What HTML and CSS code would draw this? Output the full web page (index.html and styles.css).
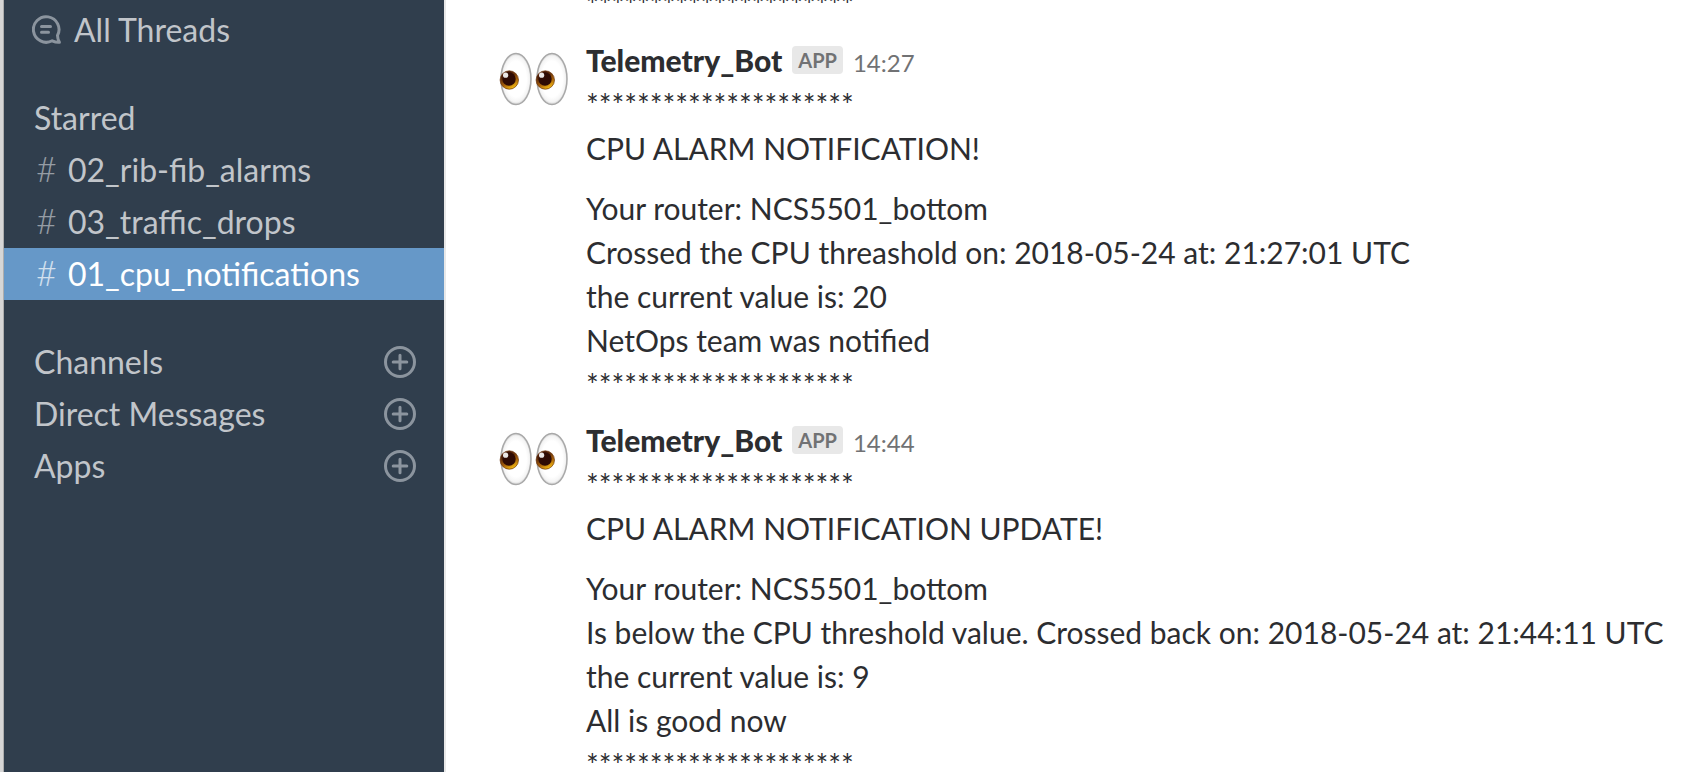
FILE: index.html
```
<!DOCTYPE html>
<html lang="en">
<head>
<meta charset="utf-8">
<title>01_cpu_notifications</title>
<link rel="stylesheet" href="styles.css">
</head>
<body>
<svg class="defs" aria-hidden="true">
  <defs>
    <radialGradient id="white" cx="0.5" cy="0.5" r="0.5">
      <stop offset="0.7" stop-color="#fff"/>
      <stop offset="0.9" stop-color="#f4f4f4"/>
      <stop offset="1" stop-color="#d0d0d0"/>
    </radialGradient>
    <linearGradient id="iris" x1="0.2" y1="0" x2="0.7" y2="1">
      <stop offset="0.2" stop-color="#4e1f0b"/>
      <stop offset="0.65" stop-color="#a8620a"/>
      <stop offset="1" stop-color="#ffc814"/>
    </linearGradient>
    <symbol id="eye" viewBox="0 0 34 56">
      <ellipse cx="17" cy="28" rx="15" ry="25.5" fill="url(#white)" stroke="#a9a9a9" stroke-width="1.5"/>
      <circle cx="10.3" cy="29" r="9.2" fill="url(#iris)" stroke="#6b330c" stroke-width="0.7"/>
      <circle cx="10" cy="28" r="6.7" fill="#2e0b04"/>
      <circle cx="6.6" cy="24.2" r="2.6" fill="#fff" opacity="0.9"/>
    </symbol>
    <symbol id="plus" viewBox="0 0 32 32">
      <g fill="none" stroke="currentColor" stroke-width="3" stroke-linecap="round">
        <circle cx="16" cy="16" r="14.5"/>
        <path d="M9.2 16h13.6M16 9.2v13.6"/>
      </g>
    </symbol>
  </defs>
</svg>
<div class="app">
  <nav class="sidebar" aria-label="Channels">
    <a class="row threads" href="#threads">
      <svg class="threads-icon" viewBox="0 0 30 30" aria-hidden="true">
        <g fill="none" stroke="currentColor" stroke-width="3" stroke-linecap="round" stroke-linejoin="round">
          <path d="M25.5 20.5A12.8 12.8 0 1 0 20.2 25.8Q24 27.6 27.4 27.3Q25.6 24 25.5 20.5Z"/>
          <path d="M9.5 11.5h9M9.5 17.3h7"/>
        </g>
      </svg>
      <span>All Threads</span>
    </a>
    <section class="group">
      <div class="row">Starred</div>
      <a class="row channel" href="#02"><span class="hash">#</span><span>02_rib-fib_alarms</span></a>
      <a class="row channel" href="#03"><span class="hash">#</span><span>03_traffic_drops</span></a>
      <a class="row channel active" href="#01" aria-current="page"><span class="hash">#</span><span>01_cpu_notifications</span></a>
    </section>
    <section class="group">
      <div class="row"><span>Channels</span><button class="add" type="button" aria-label="Add channel"><svg viewBox="0 0 32 32"><use href="#plus"/></svg></button></div>
      <div class="row"><span>Direct Messages</span><button class="add" type="button" aria-label="New direct message"><svg viewBox="0 0 32 32"><use href="#plus"/></svg></button></div>
      <div class="row"><span>Apps</span><button class="add" type="button" aria-label="Add app"><svg viewBox="0 0 32 32"><use href="#plus"/></svg></button></div>
    </section>
  </nav>
  <main class="messages">
    <article class="message">
      <div class="avatar"></div>
      <div class="body"><p>*********************</p></div>
    </article>
    <article class="message">
      <div class="avatar"><svg viewBox="0 0 72 72" role="img" aria-label="eyes"><use href="#eye" x="1" y="8" width="34" height="56"/><use href="#eye" x="37" y="8" width="34" height="56"/></svg></div>
      <div class="body">
        <header class="meta"><span class="name">Telemetry_Bot</span><span class="badge">APP</span><time class="time">14:27</time></header>
        <p>*********************<br>CPU ALARM NOTIFICATION!</p>
        <p>Your router: NCS5501_bottom<br>Crossed the CPU threashold on: 2018-05-24 at: 21:27:01 UTC<br>the current value is: 20<br>NetOps team was notified<br>*********************</p>
      </div>
    </article>
    <article class="message">
      <div class="avatar"><svg viewBox="0 0 72 72" role="img" aria-label="eyes"><use href="#eye" x="1" y="8" width="34" height="56"/><use href="#eye" x="37" y="8" width="34" height="56"/></svg></div>
      <div class="body">
        <header class="meta"><span class="name">Telemetry_Bot</span><span class="badge">APP</span><time class="time">14:44</time></header>
        <p>*********************<br>CPU ALARM NOTIFICATION UPDATE!</p>
        <p>Your router: NCS5501_bottom<br>Is below the CPU threshold value. Crossed back on: 2018-05-24 at: 21:44:11 UTC<br>the current value is: 9<br>All is good now<br>*********************</p>
      </div>
    </article>
  </main>
</div>
</body>
</html>
```
FILE: styles.css
```
* {
  box-sizing: border-box;
}

body {
  margin: 0;
  background: #fff;
  color: #2c2d30;
  font-family: Lato, sans-serif;
  font-size: 30px;
  line-height: 44px;
}

.defs {
  position: absolute;
  width: 0;
  height: 0;
}

.app {
  display: flex;
  height: 100vh;
  overflow: hidden;
  border-left: 3px solid #d6d6d6;
}

.sidebar {
  display: flex;
  flex-direction: column;
  flex: 0 0 443px;
  gap: 36px;
  padding-top: 4px;
  border-left: 1px solid #adadad;
  border-right: 2px solid #e8e8e8;
  background: #303e4d;
  color: #c1c5ca;
  font-size: 32px;
}

.row {
  display: flex;
  align-items: center;
  height: 52px;
  padding: 0 28px 0 30px;
  color: inherit;
  line-height: 52px;
  text-decoration: none;
}

.threads {
  gap: 12px;
  padding-left: 28px;
}

.threads-icon {
  width: 30px;
  height: 30px;
  color: #8b949e;
}

.channel {
  align-items: baseline;
}

.hash {
  width: 34px;
  padding-left: 2px;
  font-size: 36px;
  font-weight: 300;
  line-height: 48px;
  opacity: 0.7;
}

.active {
  background: #6698c8;
  color: #fff;
}

.add {
  width: 32px;
  height: 32px;
  margin-left: auto;
  padding: 0;
  border: 0;
  background: none;
  color: #8b949e;
}

.add svg,
.avatar svg {
  display: block;
  width: 100%;
}

.messages {
  flex: 1;
  min-width: 0;
  margin-top: -30px;
  padding-left: 52px;
}

.message {
  display: flex;
  gap: 16px;
  padding-top: 12px;
}

.avatar {
  flex: 0 0 72px;
  padding-top: 5px;
}

.body {
  flex: 1;
  min-width: 0;
  white-space: nowrap;
}

.body p {
  margin: 0;
}

.body p + p {
  margin-top: 16px;
}

.meta {
  display: flex;
  align-items: baseline;
  height: 44px;
}

.name {
  font-weight: 900;
}

.badge {
  align-self: center;
  margin: 0 10px;
  padding: 0 6px;
  border-radius: 4px;
  background: #e8e8e8;
  color: #717274;
  font-size: 20px;
  font-weight: 700;
  line-height: 28px;
}

.time {
  color: #717274;
  font-size: 24px;
}
```
